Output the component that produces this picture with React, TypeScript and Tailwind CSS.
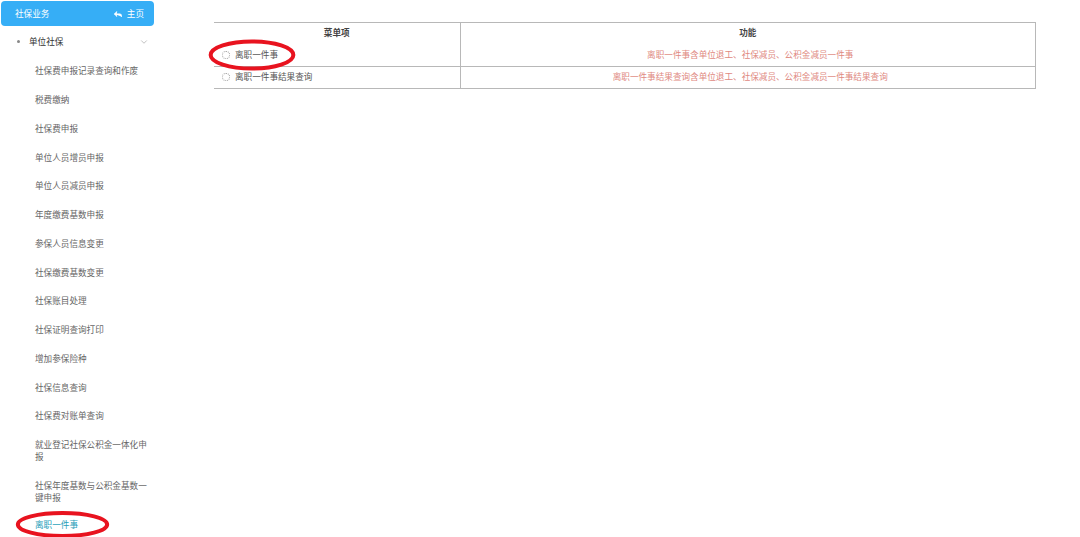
import { Reply, ChevronDown } from 'lucide-react';

const menuItems = [
  '社保费申报记录查询和作废',
  '税费缴纳',
  '社保费申报',
  '单位人员增员申报',
  '单位人员减员申报',
  '年度缴费基数申报',
  '参保人员信息变更',
  '社保缴费基数变更',
  '社保账目处理',
  '社保证明查询打印',
  '增加参保险种',
  '社保信息查询',
  '社保费对账单查询',
  '就业登记社保公积金一体化申报',
  '社保年度基数与公积金基数一键申报',
];

const rows = [
  { name: '离职一件事', desc: '离职一件事含单位退工、社保减员、公积金减员一件事' },
  { name: '离职一件事结果查询', desc: '离职一件事结果查询含单位退工、社保减员、公积金减员一件事结果查询' },
];

// hand drawn red marker rings on top of the screenshot
const RedRing = ({ className }: { className: string }) => (
  <svg className={className} viewBox="0 0 100 40" preserveAspectRatio="none" fill="none">
    <ellipse cx="50" cy="20" rx="47" ry="17" stroke="#e8131f" strokeWidth="4" vectorEffect="non-scaling-stroke" />
  </svg>
);

const Sidebar = () => (
  <aside className="w-[153px] ml-px shrink-0">
    <div className="h-[25px] mt-px pt-px bg-[#36aef6] rounded-sm flex items-center justify-between pl-[14px] pr-[10px] text-white">
      <span>社保业务</span>
      <span className="flex items-center gap-[4px]">
        <Reply className="w-[10px] h-[10px]" fill="white" strokeWidth={2.5} />
        主页
      </span>
    </div>
    <div className="h-[31px] pt-px flex items-center justify-between pl-[16px] pr-[5px] text-[#333]">
      <span className="flex items-center gap-[9px]">
        <span className="w-[3px] h-[3px] rounded-full bg-[#888]" />
        单位社保
      </span>
      <ChevronDown className="w-[10px] h-[10px] text-[#888]" strokeWidth={1.25} />
    </div>
    <ul className="text-[#666]">
      {menuItems.map((item) => (
        <li key={item} className="pl-[34px] pr-[5px] py-[8.375px] leading-[12px]">
          {item}
        </li>
      ))}
      <li className="pl-[34px] py-[7px] leading-[12px] text-[#1e9db8]">离职一件事</li>
    </ul>
  </aside>
);

export default function App() {
  return (
    <div className="relative h-[537px] w-[1080px] overflow-hidden bg-white text-[8.6px] font-['Liberation_Sans','Noto_Sans_CJK_SC',sans-serif]">
      <div className="flex">
        <Sidebar />
        <main className="ml-[60px] mt-[22px] w-[822px]">
          <table className="w-full table-fixed border-collapse border-t border-b border-r border-[#b8b8b8]">
            <thead>
              <tr className="h-[22px] text-[#444] font-bold">
                <th className="w-[246px] border-r border-[#b8b8b8] font-bold">菜单项</th>
                <th className="font-bold">功能</th>
              </tr>
            </thead>
            <tbody>
              {rows.map((row, i) => (
                <tr key={row.name} className={i === 0 ? 'h-[22px] border-b border-[#b8b8b8]' : 'h-[22px]'}>
                  <td className="border-r border-[#b8b8b8] pl-[8px] text-[#555]">
                    <span className="flex items-center gap-[5px]">
                      <span className="w-[8px] h-[8px] rounded-full border border-dotted border-[#999]" />
                      {row.name}
                    </span>
                  </td>
                  <td className="pl-[5px] text-center text-[#e0897f]">{row.desc}</td>
                </tr>
              ))}
            </tbody>
          </table>
        </main>
      </div>
      <RedRing className="absolute left-[208px] top-[39px] w-[88px] h-[32px]" />
      <RedRing className="absolute left-[15px] top-[511px] w-[95px] h-[27px]" />
    </div>
  );
}
